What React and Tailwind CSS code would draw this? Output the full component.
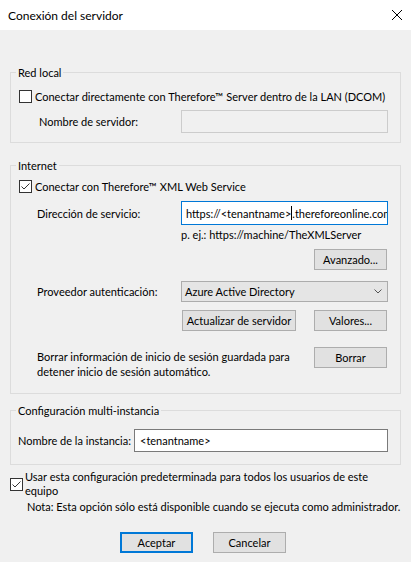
import React from "react";

function Check({ checked }) {
  return (
    <span className="w-[13px] h-[13px] border border-[#333333] bg-white flex items-center justify-center shrink-0">
      {checked && (
        <svg width="11" height="11" viewBox="0 0 11 11">
          <path d="M1.5 5.5 L4 8 L9.5 2.5" stroke="#333333" strokeWidth="1" fill="none" />
        </svg>
      )}
    </span>
  );
}

function Btn({ children, className = "" }) {
  return (
    <div className={`h-[21px] border border-[#adadad] bg-[#e1e1e1] flex items-center justify-center shrink-0 ${className}`}>
      {children}
    </div>
  );
}

export default function App() {
  return (
    <div className="w-[411px] h-[562px] bg-[#f0f0f0] font-['Lato',sans-serif] text-[11px] leading-[15px] text-black overflow-hidden">
      <div className="h-[30px] bg-white flex items-center justify-between pl-[8px] pr-[9px]">
        <span className="text-[12px]">Conexión del servidor</span>
        <svg width="10" height="10" viewBox="0 0 10 10">
          <path d="M0 0L10 10M10 0L0 10" stroke="#000000" strokeWidth="1" />
        </svg>
      </div>

      <div className="px-[10px]">
        <fieldset className="mt-[35px] border border-[#dcdcdc] pb-[9px]">
          <legend className="ml-[5px] px-[2px]">Red local</legend>
          <div className="pl-[8px] pt-[9px] flex items-center gap-[3px]">
            <Check />
            <span>Conectar directamente con Therefore™ Server dentro de la LAN (DCOM)</span>
          </div>
          <div className="mt-[6px] flex items-center">
            <span className="w-[170px] pl-[28px] shrink-0">Nombre de servidor:</span>
            <div className="w-[207px] h-[23px] border border-[#cccccc] bg-[#f0f0f0]" />
          </div>
        </fieldset>

        <fieldset className="mt-[15px] border border-[#dcdcdc] pb-[14px]">
          <legend className="ml-[5px] px-[2px]">Internet</legend>
          <div className="pl-[8px] pt-[6px] flex items-center gap-[3px]">
            <Check checked />
            <span>Conectar con Therefore™ XML Web Service</span>
          </div>
          <div className="mt-[7px] flex items-center">
            <span className="w-[170px] pl-[26px] shrink-0">Dirección de servicio:</span>
            <div className="w-[207px] h-[24px] border border-[#0078d7] bg-white pl-[4px] flex items-center overflow-hidden whitespace-nowrap">
              <span>https://&lt;tenantname&gt;</span>
              <span className="w-px h-[14px] bg-black shrink-0" />
              <span>.thereforeonline.com</span>
            </div>
          </div>
          <div className="mt-[2px] pl-[170px]">p. ej.: https://machine/TheXMLServer</div>
          <div className="mt-[7px] pl-[303px] flex">
            <Btn className="w-[73px]">Avanzado...</Btn>
          </div>
          <div className="mt-[11px] flex items-center">
            <span className="w-[170px] pl-[26px] shrink-0">Proveedor autenticación:</span>
            <div className="w-[207px] h-[21px] border border-[#acacac] bg-[#e5e5e5] pl-[3px] pr-[5px] flex items-center justify-between">
              <span>Azure Active Directory</span>
              <svg width="8" height="5" viewBox="0 0 8 5">
                <path d="M0.5 0.5 L4 4 L7.5 0.5" stroke="#555555" strokeWidth="1" fill="none" />
              </svg>
            </div>
          </div>
          <div className="mt-[8px] pl-[171px] flex gap-[18px]">
            <Btn className="w-[114px]">Actualizar de servidor</Btn>
            <Btn className="w-[73px]">Valores...</Btn>
          </div>
          <div className="mt-[16px] flex items-start">
            <div className="w-[303px] pl-[26px] pt-[2px] shrink-0">
              Borrar información de inicio de sesión guardada para
              <br />
              detener inicio de sesión automático.
            </div>
            <Btn className="w-[73px]">Borrar</Btn>
          </div>
        </fieldset>

        <fieldset className="mt-[9px] border border-[#dcdcdc] pb-[12px]">
          <legend className="ml-[5px] px-[2px]">Configuración multi-instancia</legend>
          <div className="pt-[11px] flex items-center">
            <span className="w-[123px] pl-[7px] shrink-0">Nombre de la instancia:</span>
            <div className="w-[254px] h-[23px] border border-[#7a7a7a] bg-white pl-[5px] flex items-center">
              &lt;tenantname&gt;
            </div>
          </div>
        </fieldset>

        <div className="mt-[5px] flex items-center gap-[2px]">
          <Check checked />
          <span className="leading-[14px]">
            Usar esta configuración predeterminada para todos los usuarios de este
            <br />
            equipo
          </span>
        </div>
        <div className="mt-[1px] pl-[17px]">
          Nota: Esta opción sólo está disponible cuando se ejecuta como administrador.
        </div>

        <div className="mt-[18px] pl-[110px] flex gap-[20px]">
          <div className="w-[73px] h-[21px] border-2 border-[#0078d7] bg-[#e1e1e1] flex items-center justify-center">
            Aceptar
          </div>
          <Btn className="w-[73px]">Cancelar</Btn>
        </div>
      </div>
    </div>
  );
}
